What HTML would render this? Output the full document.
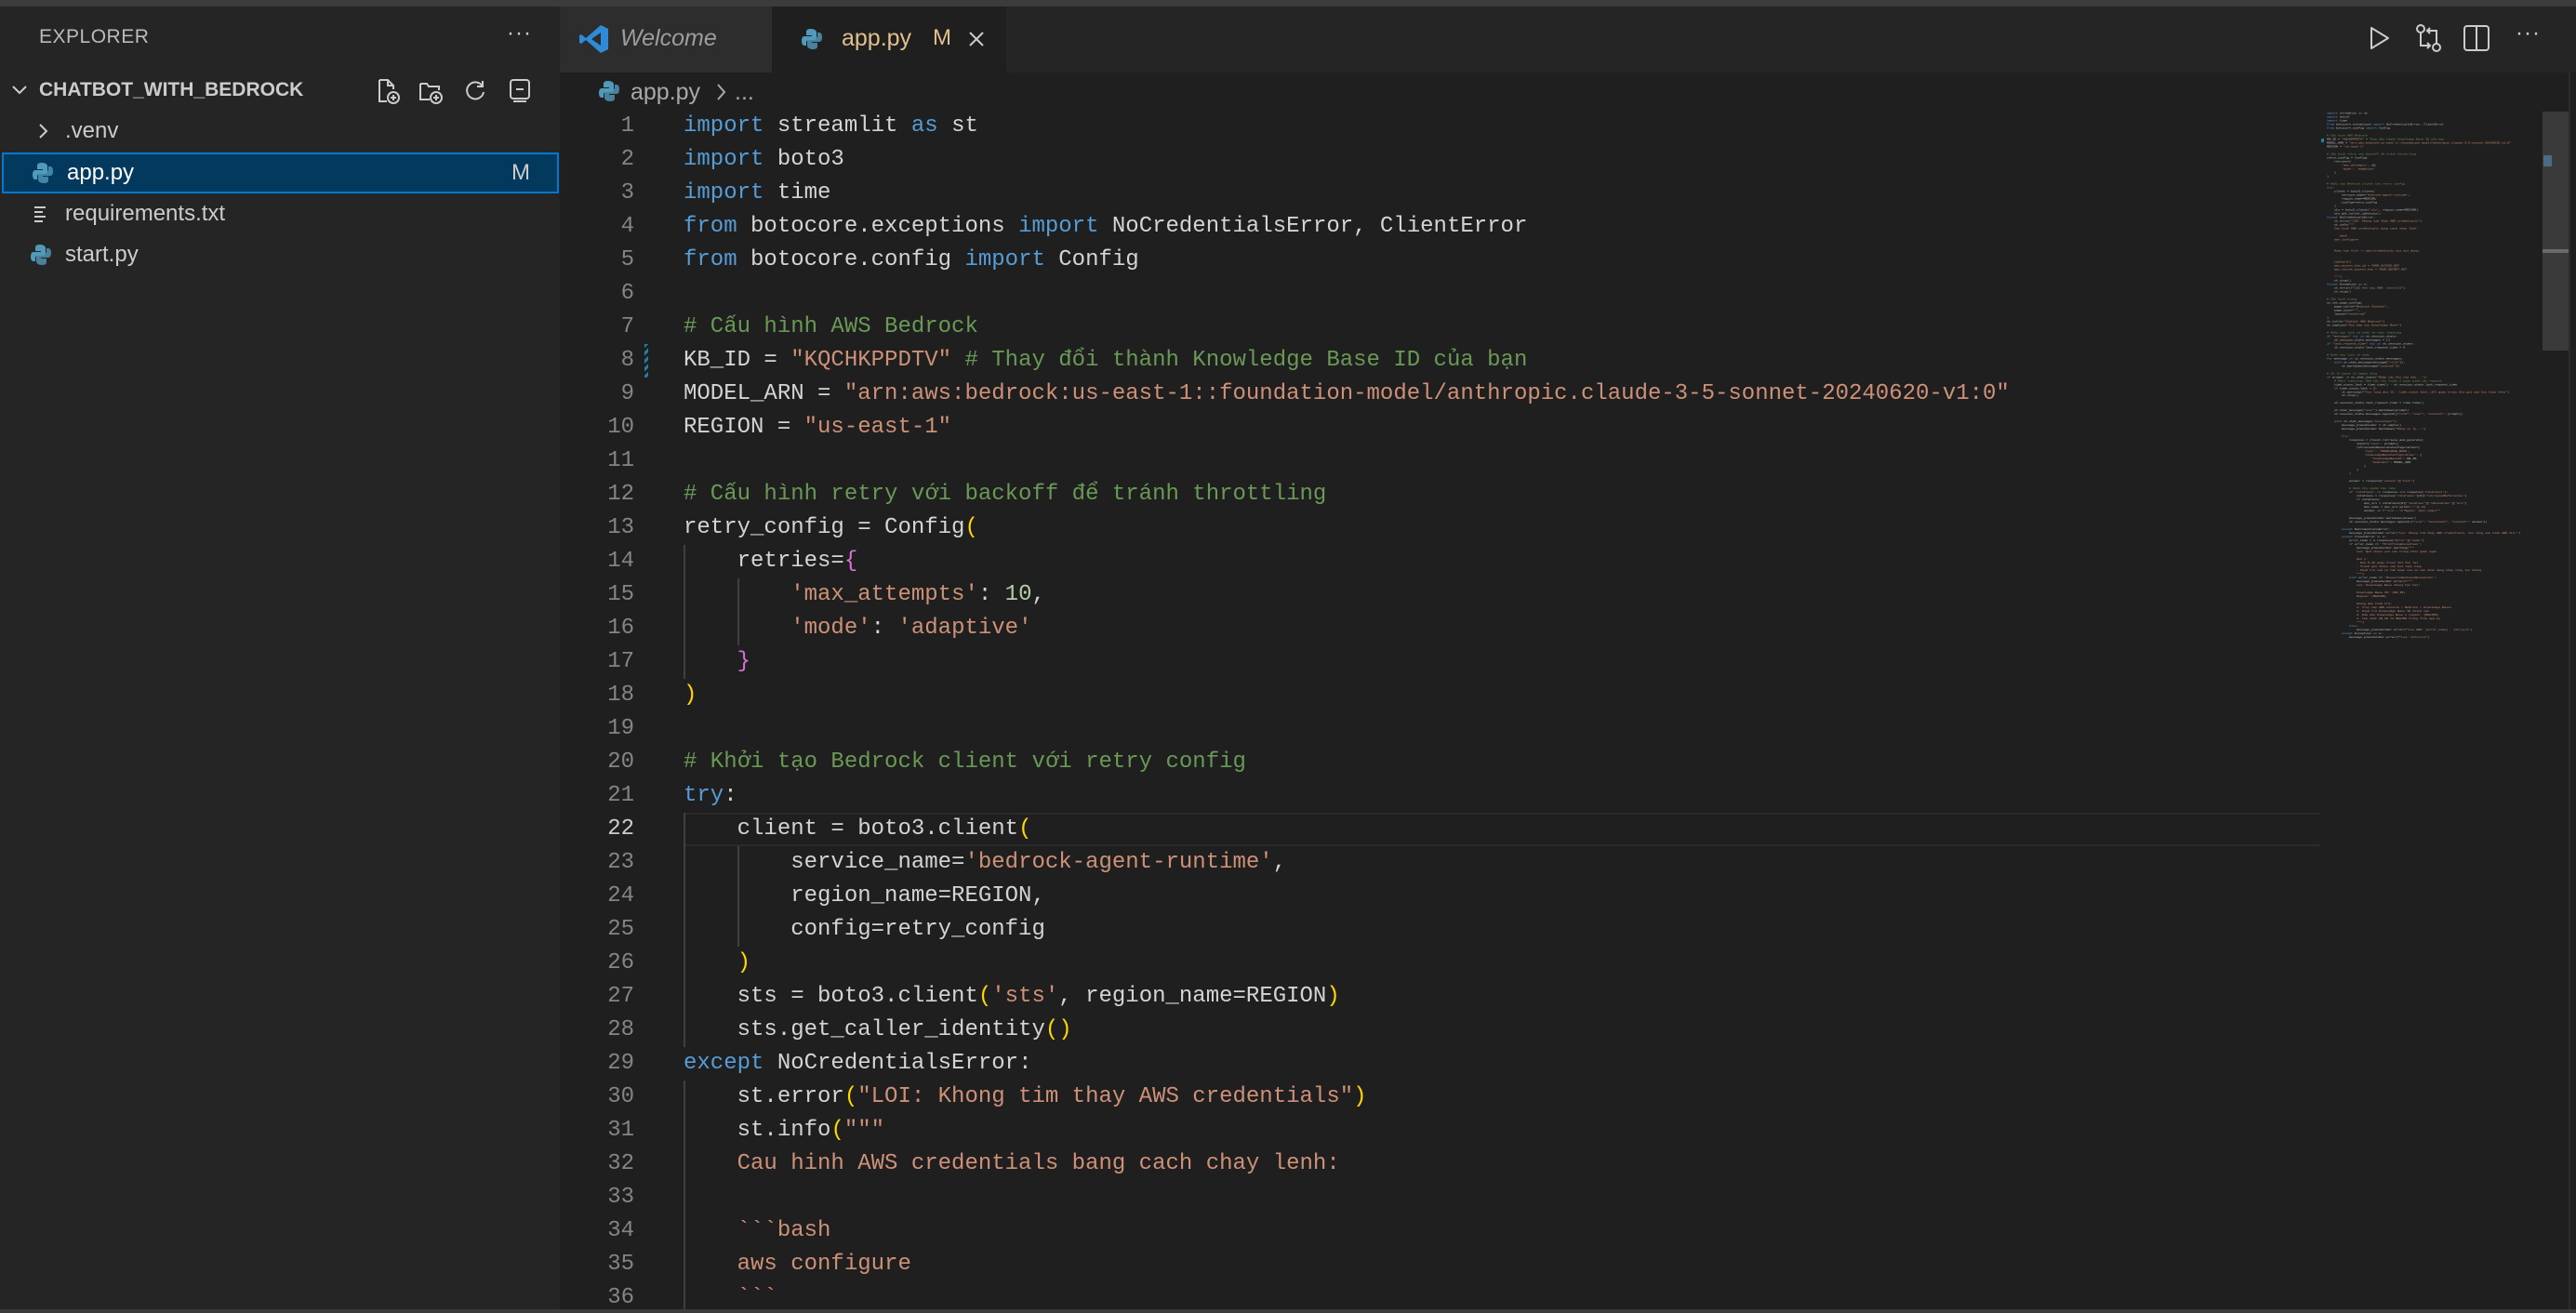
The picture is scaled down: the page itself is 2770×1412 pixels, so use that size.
<!DOCTYPE html>
<html><head><meta charset="utf-8"><style>
*{margin:0;padding:0;box-sizing:border-box}
html,body{width:2770px;height:1412px;overflow:hidden}
body{background:#1f1f1f;font-family:"Liberation Sans",sans-serif;position:relative}
.abs{position:absolute}
#top{left:0;top:0;width:2770px;height:7px;background:#3c3c3c}
#side{left:0;top:7px;width:602px;height:1405px;background:#252526}
#tabs{left:602px;top:7px;width:2168px;height:71px;background:#252526}
.row{position:absolute;left:0;width:602px;height:44px;line-height:44px;font-size:24px;color:#cccccc}
.code{position:absolute;left:735px;top:118px;font-family:"Liberation Mono",monospace;font-size:24px;color:#d4d4d4}
.code div{height:36px;line-height:36px;white-space:pre}
.ln{position:absolute;left:600px;top:118px;width:82px;text-align:right;font-family:"Liberation Mono",monospace;font-size:24px;color:#858585}
.ln div{height:36px;line-height:36px}
.k{color:#569cd6}.s{color:#ce9178}.c{color:#6a9955}.n{color:#b5cea8}.p1{color:#ffd700}.p2{color:#da70d6}
.guide{position:absolute;width:2px;background:#404040}
#mini{position:absolute;left:2502px;top:120px;width:1800px;transform-origin:0 0;transform:scale(0.139,0.111);font-family:"Liberation Mono",monospace;font-size:24px;color:#c0c0c0}
#mini div{height:36px;line-height:36px;white-space:pre}
</style></head><body>
<div id="top" class="abs"></div>
<div id="side" class="abs"></div>
<div id="tabs" class="abs"></div>

<div class="abs" style="left:42px;top:28px;font-size:21px;color:#bbbbbb;letter-spacing:0.5px">EXPLORER</div>
<div class="abs" style="left:545px;top:22px;font-size:24px;color:#cccccc;letter-spacing:1px">···</div>
<div class="row" style="top:75px">
  <svg class="abs" style="left:12px;top:14px" width="18" height="16" viewBox="0 0 18 16"><path d="M2 4 L9 11 L16 4" stroke="#cccccc" stroke-width="2" fill="none"/></svg>
  <span class="abs" style="left:42px;font-weight:bold;font-size:21px;color:#cccccc">CHATBOT_WITH_BEDROCK</span>
  <svg class="abs" style="left:402px;top:8px" width="30" height="30" viewBox="0 0 30 30" fill="none" stroke="#cccccc" stroke-width="2"><path d="M6 3 H15 L21 9 V13 M6 3 V26 H14"/><path d="M15 3 V9 H21"/><circle cx="21" cy="22" r="6"/><path d="M21 19 V25 M18 22 H24"/></svg>
  <svg class="abs" style="left:448px;top:8px" width="30" height="30" viewBox="0 0 30 30" fill="none" stroke="#cccccc" stroke-width="2"><path d="M4 7 H11 L13 10 H24 V14 M4 7 V24 H14"/><circle cx="21" cy="22" r="6"/><path d="M21 19 V25 M18 22 H24"/></svg>
  <svg class="abs" style="left:497px;top:8px" width="28" height="28" viewBox="0 0 28 28" fill="none" stroke="#cccccc" stroke-width="2"><path d="M22 10 A9 9 0 1 0 23 16"/><path d="M22 4 V10 H16"/></svg>
  <svg class="abs" style="left:544px;top:7px" width="30" height="30" viewBox="0 0 30 30" fill="none" stroke="#cccccc" stroke-width="2"><rect x="5" y="4" width="20" height="20" rx="3"/><path d="M11 14 H19"/><path d="M8 27 H22"/></svg>
</div>
<div class="row" style="top:119px">
  <svg class="abs" style="left:40px;top:13px" width="14" height="18" viewBox="0 0 14 18"><path d="M3 2 L10 9 L3 16" stroke="#cccccc" stroke-width="2" fill="none"/></svg>
  <span class="abs" style="left:70px">.venv</span>
</div>
<div class="row" style="top:164px;left:2px;width:599px;background:#04395e;border:2px solid #0078d4;line-height:40px">
  <svg class="abs" style="left:31px;top:8px" width="22" height="24" viewBox="0 0 22 24"><path d="M10 1 C5 1 5 3 5 5 V8 H11 V9 H3 C1 9 0 11 0 14 C0 17 1 19 3 19 H5 V16 C5 14 6 13 8 13 H13 C15 13 16 12 16 10 V5 C16 3 14 1 10 1 Z" fill="#519aba"/><path d="M12 23 C17 23 17 21 17 19 V16 H11 V15 H19 C21 15 22 13 22 10 C22 7 21 5 19 5 H17 V8 C17 10 16 11 14 11 H9 C7 11 6 12 6 14 V19 C6 21 8 23 12 23 Z" fill="#519aba" opacity="0.8"/></svg>
  <span class="abs" style="left:68px;color:#ffffff">app.py</span>
  <span class="abs" style="left:546px;color:#cccccc">M</span>
</div>
<div class="row" style="top:208px">
  <svg class="abs" style="left:36px;top:13px" width="16" height="18" viewBox="0 0 16 18" stroke="#cccccc" stroke-width="2"><path d="M1 2 H13 M1 7 H10 M1 12 H13 M1 17 H10"/></svg>
  <span class="abs" style="left:70px">requirements.txt</span>
</div>
<div class="row" style="top:252px">
  <svg class="abs" style="left:33px;top:10px" width="22" height="24" viewBox="0 0 22 24"><path d="M10 1 C5 1 5 3 5 5 V8 H11 V9 H3 C1 9 0 11 0 14 C0 17 1 19 3 19 H5 V16 C5 14 6 13 8 13 H13 C15 13 16 12 16 10 V5 C16 3 14 1 10 1 Z" fill="#519aba"/><path d="M12 23 C17 23 17 21 17 19 V16 H11 V15 H19 C21 15 22 13 22 10 C22 7 21 5 19 5 H17 V8 C17 10 16 11 14 11 H9 C7 11 6 12 6 14 V19 C6 21 8 23 12 23 Z" fill="#519aba" opacity="0.8"/></svg>
  <span class="abs" style="left:70px">start.py</span>
</div>

<div class="abs" style="left:602px;top:7px;width:228px;height:71px;background:#2d2d2d"></div>
<svg class="abs" style="left:622px;top:25px" width="34" height="34" viewBox="0 0 34 34"><path d="M24 2 L32 6 V28 L24 32 L8 18 L3 22 L1 21 V13 L3 12 L8 16 Z M24 10 L14 17 L24 24 Z" fill="#2f8bd7"/></svg>
<div class="abs" style="left:667px;top:27px;font-size:25px;font-style:italic;color:#9d9d9d">Welcome</div>
<div class="abs" style="left:830px;top:7px;width:252px;height:71px;background:#1f1f1f"></div>
<svg class="abs" style="left:862px;top:30px" width="22" height="24" viewBox="0 0 22 24"><path d="M10 1 C5 1 5 3 5 5 V8 H11 V9 H3 C1 9 0 11 0 14 C0 17 1 19 3 19 H5 V16 C5 14 6 13 8 13 H13 C15 13 16 12 16 10 V5 C16 3 14 1 10 1 Z" fill="#519aba"/><path d="M12 23 C17 23 17 21 17 19 V16 H11 V15 H19 C21 15 22 13 22 10 C22 7 21 5 19 5 H17 V8 C17 10 16 11 14 11 H9 C7 11 6 12 6 14 V19 C6 21 8 23 12 23 Z" fill="#519aba" opacity="0.8"/></svg>
<div class="abs" style="left:905px;top:27px;font-size:25px;color:#e2c08d">app.py</div>
<div class="abs" style="left:1003px;top:27px;font-size:24px;color:#e2c08d">M</div>
<svg class="abs" style="left:1040px;top:32px" width="20" height="20" viewBox="0 0 20 20"><path d="M3 3 L17 17 M17 3 L3 17" stroke="#cccccc" stroke-width="2"/></svg>

<svg class="abs" style="left:2546px;top:27px" width="26" height="28" viewBox="0 0 26 28"><path d="M4 3 L22 14 L4 25 Z" stroke="#cccccc" stroke-width="2" fill="none" stroke-linejoin="round"/></svg>
<svg class="abs" style="left:2596px;top:25px" width="32" height="32" viewBox="0 0 32 32" fill="none" stroke="#cccccc" stroke-width="2"><circle cx="7" cy="6" r="4"/><circle cx="24" cy="26" r="4"/><path d="M7 10 V24 H17 M14 21 L17 24 L14 27"/><path d="M24 22 V8 H14 M17 5 L14 8 L17 11"/></svg>
<svg class="abs" style="left:2648px;top:26px" width="30" height="30" viewBox="0 0 30 30" fill="none" stroke="#cccccc" stroke-width="2"><rect x="2" y="2" width="26" height="26" rx="3"/><path d="M15 2 V28"/></svg>
<div class="abs" style="left:2705px;top:22px;font-size:24px;color:#cccccc;letter-spacing:1px">···</div>

<svg class="abs" style="left:644px;top:86px" width="22" height="24" viewBox="0 0 22 24"><path d="M10 1 C5 1 5 3 5 5 V8 H11 V9 H3 C1 9 0 11 0 14 C0 17 1 19 3 19 H5 V16 C5 14 6 13 8 13 H13 C15 13 16 12 16 10 V5 C16 3 14 1 10 1 Z" fill="#519aba"/><path d="M12 23 C17 23 17 21 17 19 V16 H11 V15 H19 C21 15 22 13 22 10 C22 7 21 5 19 5 H17 V8 C17 10 16 11 14 11 H9 C7 11 6 12 6 14 V19 C6 21 8 23 12 23 Z" fill="#519aba" opacity="0.8"/></svg>
<div class="abs" style="left:678px;top:85px;font-size:25px;color:#a9a9a9">app.py</div>
<svg class="abs" style="left:770px;top:89px" width="12" height="20" viewBox="0 0 12 20"><path d="M2 2 L9 10 L2 18" stroke="#a9a9a9" stroke-width="2" fill="none"/></svg>
<div class="abs" style="left:790px;top:85px;font-size:25px;color:#a9a9a9">...</div>

<div class="abs" style="left:735px;top:874px;width:1760px;height:36px;border-top:2px solid #2a2a2a;border-bottom:2px solid #2a2a2a"></div>

<div class="guide" style="left:735px;top:586px;height:144px"></div>
<div class="guide" style="left:793px;top:622px;height:72px"></div>
<div class="guide" style="left:735px;top:874px;height:252px"></div>
<div class="guide" style="left:793px;top:910px;height:108px"></div>
<div class="guide" style="left:735px;top:1162px;height:250px"></div>

<div class="abs" style="left:693px;top:370px;width:4px;height:36px;background:repeating-linear-gradient(135deg,#1b81a8 0 3px,transparent 3px 6px)"></div>

<div class="ln"><div>1</div><div>2</div><div>3</div><div>4</div><div>5</div><div>6</div><div>7</div><div>8</div><div>9</div><div>10</div><div>11</div><div>12</div><div>13</div><div>14</div><div>15</div><div>16</div><div>17</div><div>18</div><div>19</div><div>20</div><div>21</div><div style="color:#cccccc">22</div><div>23</div><div>24</div><div>25</div><div>26</div><div>27</div><div>28</div><div>29</div><div>30</div><div>31</div><div>32</div><div>33</div><div>34</div><div>35</div><div>36</div></div>

<div class="code"><div><span class="k">import</span> streamlit <span class="k">as</span> st</div><div><span class="k">import</span> boto3</div><div><span class="k">import</span> time</div><div><span class="k">from</span> botocore.exceptions <span class="k">import</span> NoCredentialsError, ClientError</div><div><span class="k">from</span> botocore.config <span class="k">import</span> Config</div><div> </div><div><span class="c"># Cấu hình AWS Bedrock</span></div><div>KB_ID = <span class="s">"KQCHKPPDTV"</span> <span class="c"># Thay đổi thành Knowledge Base ID của bạn</span></div><div>MODEL_ARN = <span class="s">"arn:aws:bedrock:us-east-1::foundation-model/anthropic.claude-3-5-sonnet-20240620-v1:0"</span></div><div>REGION = <span class="s">"us-east-1"</span></div><div> </div><div><span class="c"># Cấu hình retry với backoff để tránh throttling</span></div><div>retry_config = Config<span class="p1">(</span></div><div>    retries=<span class="p2">{</span></div><div>        <span class="s">'max_attempts'</span>: <span class="n">10</span>,</div><div>        <span class="s">'mode'</span>: <span class="s">'adaptive'</span></div><div>    <span class="p2">}</span></div><div><span class="p1">)</span></div><div> </div><div><span class="c"># Khởi tạo Bedrock client với retry config</span></div><div><span class="k">try</span>:</div><div>    client = boto3.client<span class="p1">(</span></div><div>        service_name=<span class="s">'bedrock-agent-runtime'</span>,</div><div>        region_name=REGION,</div><div>        config=retry_config</div><div>    <span class="p1">)</span></div><div>    sts = boto3.client<span class="p1">(</span><span class="s">'sts'</span>, region_name=REGION<span class="p1">)</span></div><div>    sts.get_caller_identity<span class="p1">()</span></div><div><span class="k">except</span> NoCredentialsError:</div><div>    st.error<span class="p1">(</span><span class="s">"LOI: Khong tim thay AWS credentials"</span><span class="p1">)</span></div><div>    st.info<span class="p1">(</span><span class="s">"""</span></div><div><span class="s">    Cau hinh AWS credentials bang cach chay lenh:</span></div><div> </div><div><span class="s">    &#96;&#96;&#96;bash</span></div><div><span class="s">    aws configure</span></div><div><span class="s">    &#96;&#96;&#96;</span></div></div>

<div class="abs" style="left:2734px;top:120px;width:28px;height:257px;background:#3a3a3a"></div>
<div class="abs" style="left:2734px;top:268px;width:28px;height:4px;background:#6a6a6a"></div>
<div class="abs" style="left:2735px;top:167px;width:9px;height:12px;background:#4d6a85"></div>
<div class="abs" style="left:2496px;top:149px;width:3px;height:4px;background:#1b81a8"></div>
<div id="mini"><div><span class="k">import</span> streamlit <span class="k">as</span> st</div><div><span class="k">import</span> boto3</div><div><span class="k">import</span> time</div><div><span class="k">from</span> botocore.exceptions <span class="k">import</span> NoCredentialsError, ClientError</div><div><span class="k">from</span> botocore.config <span class="k">import</span> Config</div><div> </div><div><span class="c"># Cấu hình AWS Bedrock</span></div><div>KB_ID = <span class="s">"KQCHKPPDTV"</span> <span class="c"># Thay đổi thành Knowledge Base ID của bạn</span></div><div>MODEL_ARN = <span class="s">"arn:aws:bedrock:us-east-1::foundation-model/anthropic.claude-3-5-sonnet-20240620-v1:0"</span></div><div>REGION = <span class="s">"us-east-1"</span></div><div> </div><div><span class="c"># Cấu hình retry với backoff để tránh throttling</span></div><div>retry_config = Config(</div><div>    retries={</div><div>        <span class="s">'max_attempts'</span>: 10,</div><div>        <span class="s">'mode'</span>: <span class="s">'adaptive'</span></div><div>    }</div><div>)</div><div> </div><div><span class="c"># Khởi tạo Bedrock client với retry config</span></div><div><span class="k">try</span>:</div><div>    client = boto3.client(</div><div>        service_name=<span class="s">'bedrock-agent-runtime'</span>,</div><div>        region_name=REGION,</div><div>        config=retry_config</div><div>    )</div><div>    sts = boto3.client(<span class="s">'sts'</span>, region_name=REGION)</div><div>    sts.get_caller_identity()</div><div><span class="k">except</span> NoCredentialsError:</div><div>    st.error(<span class="s">"LOI: Khong tim thay AWS credentials"</span>)</div><div>    st.info(<span class="s">"""</span></div><div><span class="s">    Cau hinh AWS credentials bang cach chay lenh:</span></div><div> </div><div><span class="s">    &#96;&#96;&#96;bash</span></div><div><span class="s">    aws configure</span></div><div><span class="s">    &#96;&#96;&#96;</span></div><div> </div><div><span class="s">    Hoac tao file ~/.aws/credentials voi noi dung:</span></div><div> </div><div><span class="s">    &#96;&#96;&#96;</span></div><div><span class="s">    [default]</span></div><div><span class="s">    aws_access_key_id = YOUR_ACCESS_KEY</span></div><div><span class="s">    aws_secret_access_key = YOUR_SECRET_KEY</span></div><div><span class="s">    &#96;&#96;&#96;</span></div><div><span class="s">    """</span>)</div><div>    st.stop()</div><div><span class="k">except</span> Exception <span class="k">as</span> e:</div><div>    st.error(<span class="s">f"LOI ket noi AWS: {str(e)}"</span>)</div><div>    st.stop()</div><div> </div><div><span class="c"># Cấu hình trang</span></div><div>st.set_page_config(</div><div>    page_title=<span class="s">"Bedrock Chatbot"</span>,</div><div>    page_icon=<span class="s">"*"</span>,</div><div>    layout=<span class="s">"centered"</span></div><div>)</div><div>st.title(<span class="s">"Chatbot AWS Bedrock"</span>)</div><div>st.caption(<span class="s">"Hoi dap voi Knowledge Base"</span>)</div><div> </div><div><span class="c"># Khởi tạo lịch sử chat và rate limiting</span></div><div><span class="k">if</span> <span class="s">"messages"</span> <span class="k">not in</span> st.session_state:</div><div>    st.session_state.messages = []</div><div><span class="k">if</span> <span class="s">"last_request_time"</span> <span class="k">not in</span> st.session_state:</div><div>    st.session_state.last_request_time = 0</div><div> </div><div><span class="c"># Hiển thị lịch sử chat</span></div><div><span class="k">for</span> message <span class="k">in</span> st.session_state.messages:</div><div>    <span class="k">with</span> st.chat_message(message[<span class="s">"role"</span>]):</div><div>        st.markdown(message[<span class="s">"content"</span>])</div><div> </div><div><span class="c"># Xử lý input từ người dùng</span></div><div><span class="k">if</span> prompt := st.chat_input(<span class="s">"Nhập câu hỏi của bạn..."</span>):</div><div><span class="c">    # Rate limiting: Đảm bảo tối thiểu 2 giây giữa các request</span></div><div>    time_since_last = time.time() - st.session_state.last_request_time</div><div>    <span class="k">if</span> time_since_last &lt; 2:</div><div>        st.warning(<span class="s">f"Vui long doi {2 - time_since_last:.1f} giay truoc khi gui cau hoi tiep theo"</span>)</div><div>        st.stop()</div><div> </div><div>    st.session_state.last_request_time = time.time()</div><div> </div><div>    st.chat_message(<span class="s">"user"</span>).markdown(prompt)</div><div>    st.session_state.messages.append({<span class="s">"role"</span>: <span class="s">"user"</span>, <span class="s">"content"</span>: prompt})</div><div> </div><div>    <span class="k">with</span> st.chat_message(<span class="s">"assistant"</span>):</div><div>        message_placeholder = st.empty()</div><div>        message_placeholder.markdown(<span class="s">"Dang xu ly..."</span>)</div><div> </div><div>        <span class="k">try</span>:</div><div>            response = client.retrieve_and_generate(</div><div>                input={<span class="s">'text'</span>: prompt},</div><div>                retrieveAndGenerateConfiguration={</div><div>                    <span class="s">'type'</span>: <span class="s">'KNOWLEDGE_BASE'</span>,</div><div>                    <span class="s">'knowledgeBaseConfiguration'</span>: {</div><div>                        <span class="s">'knowledgeBaseId'</span>: KB_ID,</div><div>                        <span class="s">'modelArn'</span>: MODEL_ARN</div><div>                    }</div><div>                }</div><div>            )</div><div> </div><div>            answer = response[<span class="s">'output'</span>][<span class="s">'text'</span>]</div><div> </div><div><span class="c">            # Hiển thị nguồn tài liệu</span></div><div>            <span class="k">if</span> <span class="s">'citations'</span> <span class="k">in</span> response <span class="k">and</span> response[<span class="s">'citations'</span>]:</div><div>                citations = response[<span class="s">'citations'</span>][0][<span class="s">'retrievedReferences'</span>]</div><div>                <span class="k">if</span> citations:</div><div>                    doc_uri = citations[0][<span class="s">'location'</span>][<span class="s">'s3Location'</span>][<span class="s">'uri'</span>]</div><div>                    doc_name = doc_uri.split(<span class="s">'/'</span>)[-1]</div><div>                    answer += <span class="s">f"\n\n---\n*Nguon: {doc_name}*"</span></div><div> </div><div>            message_placeholder.markdown(answer)</div><div>            st.session_state.messages.append({<span class="s">"role"</span>: <span class="s">"assistant"</span>, <span class="s">"content"</span>: answer})</div><div> </div><div>        <span class="k">except</span> NoCredentialsError:</div><div>            message_placeholder.error(<span class="s">"Loi: Khong tim thay AWS credentials. Vui long cau hinh AWS CLI."</span>)</div><div>        <span class="k">except</span> ClientError <span class="k">as</span> e:</div><div>            error_code = e.response[<span class="s">'Error'</span>][<span class="s">'Code'</span>]</div><div>            <span class="k">if</span> error_code == <span class="s">'ThrottlingException'</span>:</div><div>                message_placeholder.warning(<span class="s">"""</span></div><div><span class="s">                Loi: Qua nhieu yeu cau trong thoi gian ngan</span></div><div> </div><div><span class="s">                Goi y:</span></div><div><span class="s">                - Doi 5-10 giay truoc khi thu lai</span></div><div><span class="s">                - Tranh gui nhieu cau hoi lien tiep</span></div><div><span class="s">                - Kiem tra xem co tab hoac cua so nao khac dang chay cung luc khong</span></div><div><span class="s">                """</span>)</div><div>            <span class="k">elif</span> error_code == <span class="s">'ResourceNotFoundException'</span>:</div><div>                message_placeholder.error(<span class="s">f"""</span></div><div><span class="s">                Loi: Knowledge Base khong ton tai!</span></div><div> </div><div><span class="s">                Knowledge Base ID: {KB_ID}</span></div><div><span class="s">                Region: {REGION}</span></div><div> </div><div><span class="s">                Huong dan kiem tra:</span></div><div><span class="s">                1. Truy cap AWS Console &gt; Bedrock &gt; Knowledge Bases</span></div><div><span class="s">                2. Kiem tra Knowledge Base ID chinh xac</span></div><div><span class="s">                3. Dam bao Knowledge Base o region: {REGION}</span></div><div><span class="s">                4. Cap nhat KB_ID va REGION trong file app.py</span></div><div><span class="s">                """</span>)</div><div>            <span class="k">else</span>:</div><div>                message_placeholder.error(<span class="s">f"Loi AWS: {error_code} - {str(e)}"</span>)</div><div>        <span class="k">except</span> Exception <span class="k">as</span> e:</div><div>            message_placeholder.error(<span class="s">f"Loi: {str(e)}"</span>)</div></div>

<div class="abs" style="left:2762px;top:78px;width:2px;height:1330px;background:#2b2b2b"></div>
<div class="abs" style="left:0;top:1408px;width:2770px;height:4px;background:#3c3c3c"></div>
</body></html>
